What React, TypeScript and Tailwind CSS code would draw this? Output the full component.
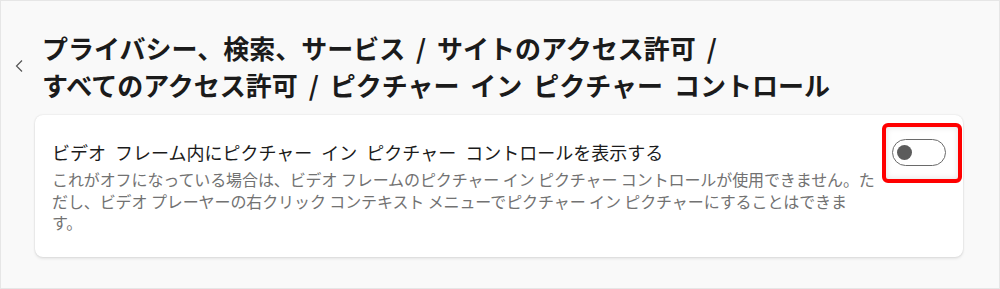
import React, { useState } from 'react';

const FONT = "font-['Noto_Sans_CJK_JP','Noto_Sans',sans-serif]";

const Toggle: React.FC<{ on: boolean; onChange: () => void }> = ({ on, onChange }) => (
  <button
    onClick={onChange}
    className="relative w-[54px] h-[27px] rounded-full border-[1.5px] border-[#6a6a6a] bg-white flex items-center px-[3.5px]"
  >
    <span className={`block w-[15px] h-[15px] rounded-full bg-[#5c5c5c] ${on ? 'ml-auto' : ''}`} />
  </button>
);

const App: React.FC = () => {
  const [enabled, setEnabled] = useState(false);

  return (
    <div className={`w-[1000px] h-[289px] border border-[#e6e6e6] bg-[#f9f9f9] ${FONT}`}>
      {/* Breadcrumb header */}
      <div className="flex items-center pt-[28px]">
        <button className="w-[41px] pl-[13px] text-[#555]">
          <svg width="10" height="14" viewBox="0 0 10 14" fill="none">
            <path d="M8 1.5 L2.5 7 L8 12.5" stroke="currentColor" strokeWidth="1.2" />
          </svg>
        </button>
        <h1 className="text-[26px] leading-[37px] font-bold text-[#1b1b1b] [word-spacing:5px]">
          プライバシー、検索、サービス / サイトのアクセス許可 /
          <br />
          すべてのアクセス許可 / ピクチャー イン ピクチャー コントロール
        </h1>
      </div>

      {/* Setting card */}
      <div className="ml-[34px] mt-[12px] w-[928px] h-[142px] bg-white rounded-[8px] shadow-[0_0_2px_rgba(0,0,0,0.14),0_2px_3px_rgba(0,0,0,0.08)] flex items-start pl-[17px] pr-[17px] pt-[24px]">
        <div className="flex-1">
          <p className="text-[18px] leading-[24px] text-[#1b1b1b] mt-[1px] [word-spacing:5px]">
            ビデオ フレーム内にピクチャー イン ピクチャー コントロールを表示する
          </p>
          <p className="mt-[5px] text-[16px] leading-[21.5px] text-[#727272] tracking-[-0.1px]">
            これがオフになっている場合は、ビデオ フレームのピクチャー イン ピクチャー コントロールが使用できません。た
            <br />
            だし、ビデオ プレーヤーの右クリック コンテキスト メニューでピクチャー イン ピクチャーにすることはできま
            <br />
            す。
          </p>
        </div>
        <div className="relative">
          <Toggle on={enabled} onChange={() => setEnabled(v => !v)} />
          {/* annotation highlight */}
          <div className="absolute -left-[10px] -top-[16px] w-[80px] h-[60px] border-4 border-[#ff0000] rounded-[6px] shadow-[inset_0_0_6px_rgba(0,0,0,0.12)] pointer-events-none" />
        </div>
      </div>
    </div>
  );
};

export default App;
